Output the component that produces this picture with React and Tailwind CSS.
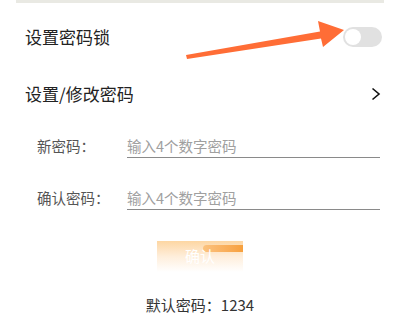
import React from 'react';

const font = { fontFamily: '"Noto Sans CJK SC", "Noto Sans", sans-serif' };

const Field = ({ label, className }) => (
  <div className={`flex items-center h-[25px] pl-[37px] pr-[20px] ${className}`}>
    <span className="w-[90px] text-[14.5px] text-[#555]">{label}</span>
    <input
      className="flex-1 h-[25px] border-b-[1.5px] border-[#8a8a8a] text-[14.5px] text-[#333] placeholder-[#a0a0a0] outline-none bg-transparent"
      placeholder="输入4个数字密码"
    />
  </div>
);

export default function App() {
  return (
    <div className="relative w-[400px] h-[330px] bg-white overflow-hidden" style={font}>
      <div className="mx-4 h-[3px] bg-[#e9e9e3]" />

      <div className="flex items-center justify-between h-[68px] pl-[25px] pr-[18px]">
        <span className="text-[17px] text-[#222]">设置密码锁</span>
        <div className="w-[39px] h-[20px] rounded-full bg-[#e1e1e1] flex items-center pl-[2px]">
          <div className="w-[16px] h-[16px] rounded-full bg-white" />
        </div>
      </div>

      <div className="flex items-center justify-between h-[46px] pl-[25px] pr-[19px]">
        <span className="text-[17px] text-[#222]">设置/修改密码</span>
        <svg width="10" height="14" viewBox="0 0 10 14" fill="none">
          <path d="M1.5 1.5 L8 7 L1.5 12.5" stroke="#111" strokeWidth="1.6" />
        </svg>
      </div>

      <Field label="新密码：" className="mt-[16px]" />
      <Field label="确认密码：" className="mt-[27px]" />

      <div className="flex justify-center mt-[31px]">
        <button className="relative w-[86px] h-[31px] bg-gradient-to-b from-[#fdd6a2] via-[#feeedb] to-white text-white text-[15px] overflow-hidden">
          <div className="absolute right-0 top-[4px] w-[40px] h-[7px] rounded-l-full bg-gradient-to-r from-[#fbc27e] to-[#f7a03c]" />
          <span className="relative">确认</span>
        </button>
      </div>

      <div className="mt-[23px] text-center text-[15px] text-[#333] leading-[20px]">默认密码：1234</div>

      <svg className="absolute left-0 top-0 pointer-events-none" width="400" height="330">
        <polygon
          points="186,55 187,59 321,38.5 323,47 344,30 318,21 320,31.5"
          fill="#ff6d36"
        />
      </svg>
    </div>
  );
}
